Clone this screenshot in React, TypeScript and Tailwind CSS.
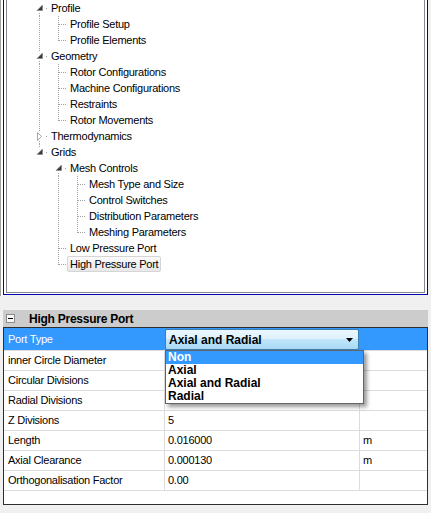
import React from 'react';

type Cell =
  | { t: 'none' }
  | { t: 'pipe' }
  | { t: 'tee' }
  | { t: 'ell' }
  | { t: 'exp'; open: boolean; up: boolean; down: boolean };

type TreeRow = { label: string; cells: Cell[]; selected?: boolean };

const N: Cell = { t: 'none' };
const P: Cell = { t: 'pipe' };
const T: Cell = { t: 'tee' };
const L: Cell = { t: 'ell' };
const exp = (open: boolean, up: boolean, down: boolean): Cell => ({ t: 'exp', open, up, down });

const tree: TreeRow[] = [
  { label: 'Profile', cells: [exp(true, false, true)] },
  { label: 'Profile Setup', cells: [P, T] },
  { label: 'Profile Elements', cells: [P, L] },
  { label: 'Geometry', cells: [exp(true, true, true)] },
  { label: 'Rotor Configurations', cells: [P, T] },
  { label: 'Machine Configurations', cells: [P, T] },
  { label: 'Restraints', cells: [P, T] },
  { label: 'Rotor Movements', cells: [P, L] },
  { label: 'Thermodynamics', cells: [exp(false, true, true)] },
  { label: 'Grids', cells: [exp(true, true, false)] },
  { label: 'Mesh Controls', cells: [N, exp(true, false, true)] },
  { label: 'Mesh Type and Size', cells: [N, P, T] },
  { label: 'Control Switches', cells: [N, P, T] },
  { label: 'Distribution Parameters', cells: [N, P, T] },
  { label: 'Meshing Parameters', cells: [N, P, L] },
  { label: 'Low Pressure Port', cells: [N, T] },
  { label: 'High Pressure Port', cells: [N, L], selected: true },
];

// values under the open dropdown are hidden, so left blank
const props = [
  { name: 'inner Circle Diameter', value: '', unit: '' },
  { name: 'Circular Divisions', value: '', unit: '' },
  { name: 'Radial Divisions', value: '', unit: '' },
  { name: 'Z Divisions', value: '5', unit: '' },
  { name: 'Length', value: '0.016000', unit: 'm' },
  { name: 'Axial Clearance', value: '0.000130', unit: 'm' },
  { name: 'Orthogonalisation Factor', value: '0.00', unit: '' },
];

const portTypes = ['Non', 'Axial', 'Axial and Radial', 'Radial'];

// dotted tree guide, one 19x16 cell per indent level
function TreeCell({ cell }: { cell: Cell }) {
  const dot = { stroke: '#a0a0a0', strokeWidth: 1, strokeDasharray: '1 1' };
  return (
    <svg width="19" height="16" className="block shrink-0">
      {(cell.t === 'pipe' || cell.t === 'tee') && <line x1="10.5" y1="0" x2="10.5" y2="16" {...dot} />}
      {cell.t === 'ell' && <line x1="10.5" y1="0" x2="10.5" y2="9" {...dot} />}
      {(cell.t === 'tee' || cell.t === 'ell') && <line x1="11" y1="8.5" x2="19" y2="8.5" {...dot} />}
      {cell.t === 'exp' && (
        <>
          {cell.up && <line x1="10.5" y1="0" x2="10.5" y2="4" {...dot} />}
          {cell.down && <line x1="10.5" y1="13" x2="10.5" y2="16" {...dot} />}
          <line x1="17" y1="8.5" x2="19" y2="8.5" {...dot} />
          {cell.open ? (
            <polygon points="13.5,5 13.5,10.5 8,10.5" fill="#3a3a3a" stroke="#7a7a7a" strokeWidth="0.5" />
          ) : (
            <polygon points="8.5,4.5 12.5,8.5 8.5,12.5" fill="#ffffff" stroke="#a6a6a6" strokeWidth="1" />
          )}
        </>
      )}
    </svg>
  );
}

function Tree() {
  return (
    <div className="flex h-[296px]">
      <div className="w-px bg-[#a0a0a0]" />
      <div className="w-[2px] bg-white" />
      <div className="h-[295px] w-[425px] border-x border-b border-[#0000b0] bg-white px-[2px] pb-px">
        <div className="h-full overflow-hidden border-x border-b border-[#828790] bg-white pl-[22px]">
          {tree.map((row) => (
            <div key={row.label} className="flex h-4 items-center">
              {row.cells.map((c, i) => (
                <TreeCell key={i} cell={c} />
              ))}
              <span
                className={`h-4 whitespace-nowrap border px-[2px] text-[11px] leading-[14px] tracking-[-0.25px] text-black ${
                  row.selected
                    ? 'rounded-[2px] border-[#d5d5d5] bg-linear-to-b from-[#fbfbfb] to-[#e8e8e8]'
                    : 'border-transparent'
                }`}
              >
                {row.label}
              </span>
            </div>
          ))}
        </div>
      </div>
    </div>
  );
}

function PortCombo() {
  return (
    <div className="mt-px flex h-[21px] w-[194px] items-center rounded-[2px] border border-[#3c7fb1] bg-[linear-gradient(to_bottom,#ecf7fd_0%,#dcf1fc_50%,#c1e6fb_50%,#a9d9f4_100%)] pl-[3px] pr-[5px]">
      <span className="flex-1 text-[12px] font-bold leading-none text-black">Axial and Radial</span>
      <svg width="7" height="4" className="block">
        <polygon points="0,0 7,0 3.5,4" fill="#000" />
      </svg>
    </div>
  );
}

function PropertyGrid() {
  return (
    <div className="ml-[3px] mt-[14px] w-[425px]">
      <div className="flex h-[17px] items-center bg-[#cccccc]">
        <div className="ml-[3px] flex h-[9px] w-[9px] items-center justify-center border border-[#8c8c8c] bg-[#f7f7f7]">
          <div className="h-px w-[5px] bg-black" />
        </div>
        <span className="ml-[14px] text-[12px] font-bold leading-none tracking-[-0.25px] text-black">
          High Pressure Port
        </span>
      </div>
      <div className="relative h-[178px] border border-[#2e2e2e] bg-white">
        <div className="flex h-[23px] border-b border-[#dcdcdc] bg-[#3399ff]">
          <div className="flex w-[161px] items-center pl-[4px] text-[11px] tracking-[-0.25px] text-white">Port Type</div>
          <PortCombo />
        </div>
        {props.map((p) => (
          <div key={p.name} className="flex h-5 border-b border-[#dcdcdc] text-[11px] tracking-[-0.25px] text-black">
            <div className="flex w-[161px] items-center border-r border-[#dcdcdc] pl-[4px]">{p.name}</div>
            <div className="flex w-[195px] items-center border-r border-[#dcdcdc] pl-[3px]">{p.value}</div>
            <div className="flex flex-1 items-center pl-[3px]">{p.unit}</div>
          </div>
        ))}
        <div className="absolute left-[161px] top-[22px] w-[199px] border border-[#646464] bg-white shadow-[3px_3px_4px_rgba(0,0,0,0.4)]">
          {portTypes.map((t, i) => (
            <div
              key={t}
              className={`h-[13px] pl-[2px] text-[12px] font-bold leading-[13px] ${
                i === 0 ? 'bg-[#3399ff] text-white' : 'text-black'
              }`}
            >
              {t}
            </div>
          ))}
        </div>
      </div>
    </div>
  );
}

export default function App() {
  return (
    <div className="h-[513px] w-[431px] overflow-hidden bg-[#f0f0f0] font-['Liberation_Sans',Arial,sans-serif]">
      <Tree />
      <PropertyGrid />
    </div>
  );
}
